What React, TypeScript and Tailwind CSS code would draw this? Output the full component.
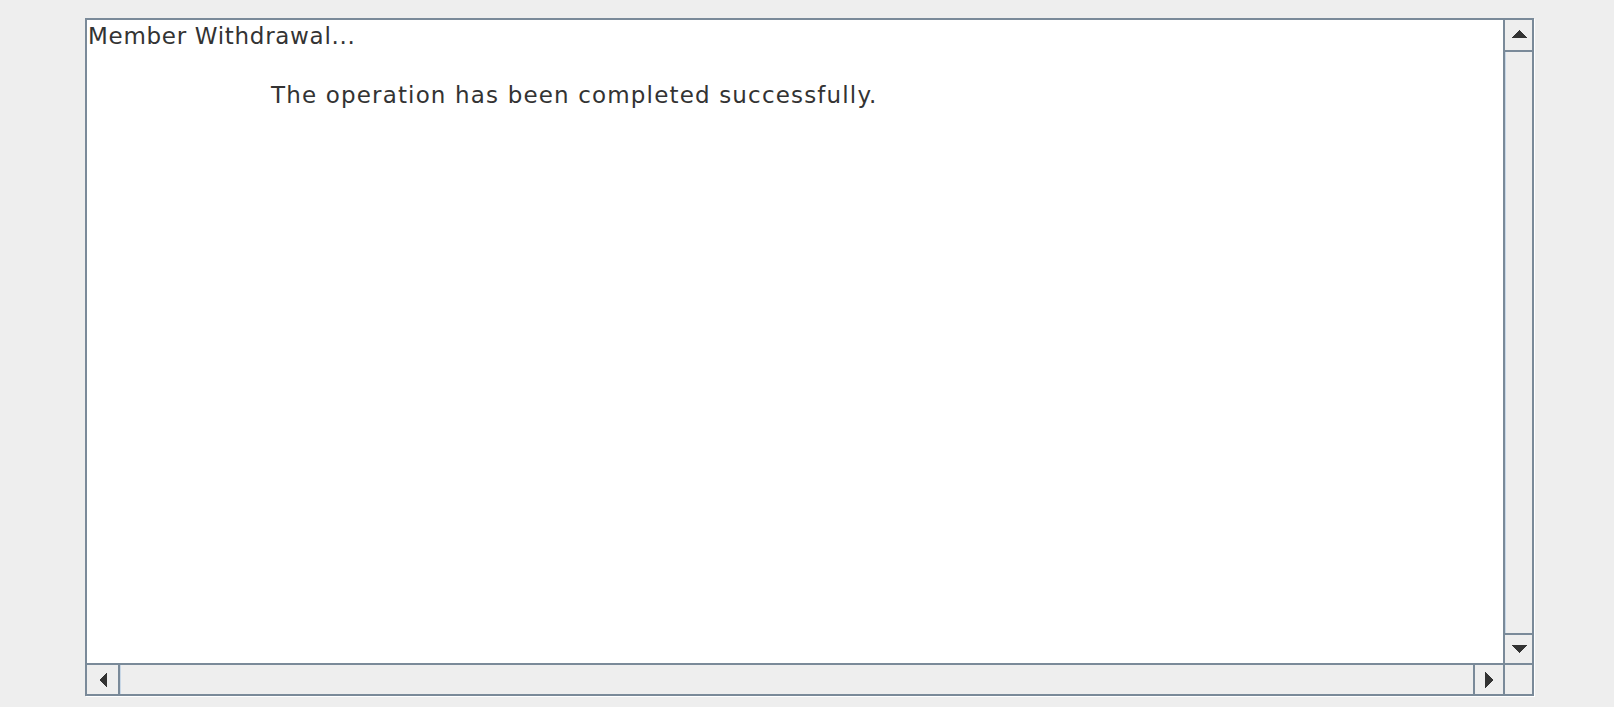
function Arrow({ dir }: { dir: "up" | "down" | "left" | "right" }) {
  const pts =
    dir === "up"
      ? "0,8 8,0 16,8"
      : dir === "down"
        ? "0,0 16,0 8,8"
        : dir === "left"
          ? "8,0 8,16 0,8"
          : "0,0 0,16 8,8";
  const w = dir === "up" || dir === "down" ? 16 : 8;
  const h = dir === "up" || dir === "down" ? 8 : 16;
  return (
    <svg width={w} height={h} viewBox={`0 0 ${w} ${h}`} shapeRendering="crispEdges">
      <polygon points={pts} fill="#333333" />
    </svg>
  );
}

export default function App() {
  return (
    <div className="h-[707px] w-[1614px] bg-[#eeeeee] pt-[18px] pl-[85px] font-['DejaVu_Sans',sans-serif]">
      <div className="grid h-[678px] w-[1449px] grid-cols-[1fr_29px] grid-rows-[1fr_31px] border-2 border-[#7a8a99] shadow-[1px_1px_0_#ffffff]">
        {/* viewport */}
        <div className="bg-white text-[23px] leading-[26px] text-[#333333]">
          <div className="pl-px pt-[3px] tracking-[0.7px]">Member Withdrawal...</div>
          <div className="pl-[184px] pt-[33px] tracking-[1.16px]">The operation has been completed successfully.</div>
        </div>

        {/* vertical scrollbar */}
        <div className="flex flex-col border-l-2 border-[#7a8a99] bg-[#eeeeee]">
          <div className="flex h-[32px] items-center justify-center border-b-2 border-[#7a8a99] pb-[2px]">
            <Arrow dir="up" />
          </div>
          <div className="flex-1 border-l border-[#c8d7e6]" />
          <div className="flex h-[30px] items-center justify-center border-t-2 border-[#7a8a99]">
            <Arrow dir="down" />
          </div>
        </div>

        {/* horizontal scrollbar */}
        <div className="flex border-t-2 border-[#7a8a99] bg-[#eeeeee]">
          <div className="flex w-[33px] items-center justify-center border-r-2 border-[#7a8a99]">
            <Arrow dir="left" />
          </div>
          <div className="flex-1 border-l border-[#c8d7e6]" />
          <div className="flex w-[30px] items-center justify-center border-l-2 border-[#7a8a99]">
            <Arrow dir="right" />
          </div>
        </div>

        {/* corner */}
        <div className="border-t-2 border-l-2 border-[#7a8a99] bg-[#eeeeee]" />
      </div>
    </div>
  );
}
